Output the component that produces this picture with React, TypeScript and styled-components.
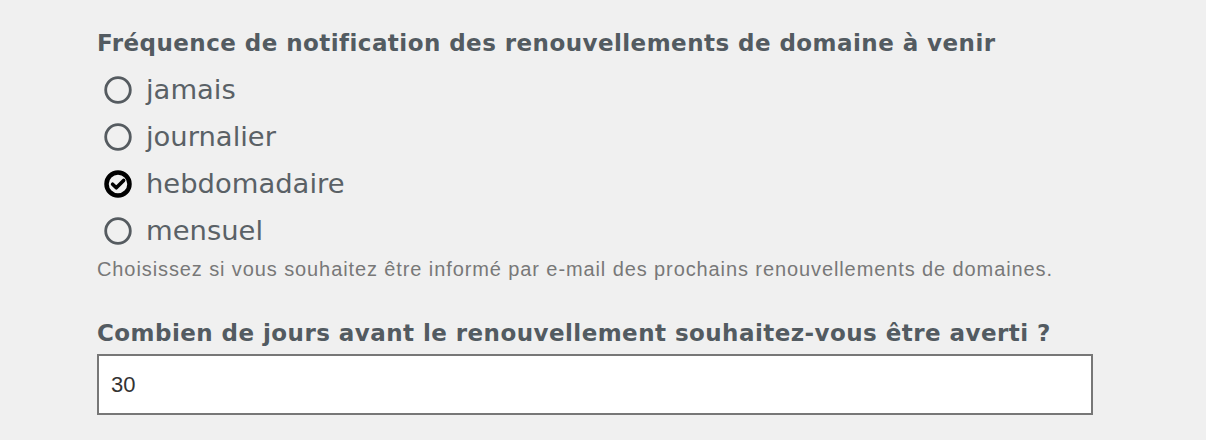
import React, { useState } from "react";
import styled, { createGlobalStyle } from "styled-components";

const Global = createGlobalStyle`
  html, body { margin: 0; padding: 0; background: #f0f0f0; }
  body { font-family: "DejaVu Sans", sans-serif; }
`;

const Page = styled.div`
  padding: 28px 0 0 97px;
  width: 996px;
`;

const Field = styled.fieldset`
  border: 0;
  margin: 0;
  padding: 0;
`;

const Heading = styled.div`
  font-family: "DejaVu Sans", sans-serif;
  font-weight: 700;
  font-size: 23px;
  letter-spacing: 0.45px;
  line-height: 30px;
  color: #535b61;
  white-space: nowrap;
`;

const Options = styled.div`
  display: flex;
  flex-direction: column;
  margin-top: 8px;
`;

const Option = styled.label`
  display: flex;
  align-items: center;
  gap: 14px;
  height: 47px;
  padding-left: 7px;
  cursor: pointer;
  font-family: "DejaVu Sans", sans-serif;
  font-size: 27.4px;
  color: #5a6166;
`;

const HiddenInput = styled.input`
  position: absolute;
  opacity: 0;
  width: 0;
  height: 0;
`;

const Help = styled.div`
  font-family: "Liberation Sans", Arial, sans-serif;
  font-size: 20px;
  letter-spacing: 0.9px;
  line-height: 22px;
  color: #787878;
  margin-top: 4px;
  white-space: nowrap;
`;

const Second = styled.div`
  margin-top: 38px;
`;

const NumberInput = styled.input`
  display: block;
  box-sizing: border-box;
  width: 996px;
  height: 61px;
  margin-top: 6px;
  border: 2px solid #777;
  background: #fff;
  padding: 0 12px;
  font-family: "Liberation Sans", Arial, sans-serif;
  font-size: 22px;
  color: #333;
  outline: none;
`;

const RadioIcon = ({ checked }: { checked: boolean }) =>
  checked ? (
    <svg width="28" height="28" viewBox="0 0 28 28">
      <circle cx="14" cy="14" r="11.5" fill="none" stroke="#000" strokeWidth="4.5" />
      <path d="M8.6 14.2 L12.3 17.8 L19.6 10.4" fill="none" stroke="#000" strokeWidth="3.6" strokeLinecap="round" strokeLinejoin="round" />
    </svg>
  ) : (
    <svg width="28" height="28" viewBox="0 0 28 28">
      <circle cx="14" cy="14" r="12.3" fill="none" stroke="#555b60" strokeWidth="2.8" />
    </svg>
  );

const choices = ["jamais", "journalier", "hebdomadaire", "mensuel"];

export default function App() {
  const [value, setValue] = useState("hebdomadaire");
  const [days, setDays] = useState("30");
  return (
    <>
      <Global />
      <Page>
        <Field>
          <Heading>Fréquence de notification des renouvellements de domaine à venir</Heading>
          <Options>
            {choices.map((c) => (
              <Option key={c}>
                <HiddenInput
                  type="radio"
                  name="freq"
                  value={c}
                  checked={value === c}
                  onChange={() => setValue(c)}
                />
                <RadioIcon checked={value === c} />
                {c}
              </Option>
            ))}
          </Options>
          <Help>
            Choisissez si vous souhaitez être informé par e-mail des prochains renouvellements de domaines.
          </Help>
        </Field>
        <Second>
          <Heading>Combien de jours avant le renouvellement souhaitez-vous être averti ?</Heading>
          <NumberInput type="text" value={days} onChange={(e) => setDays(e.target.value)} />
        </Second>
      </Page>
    </>
  );
}
